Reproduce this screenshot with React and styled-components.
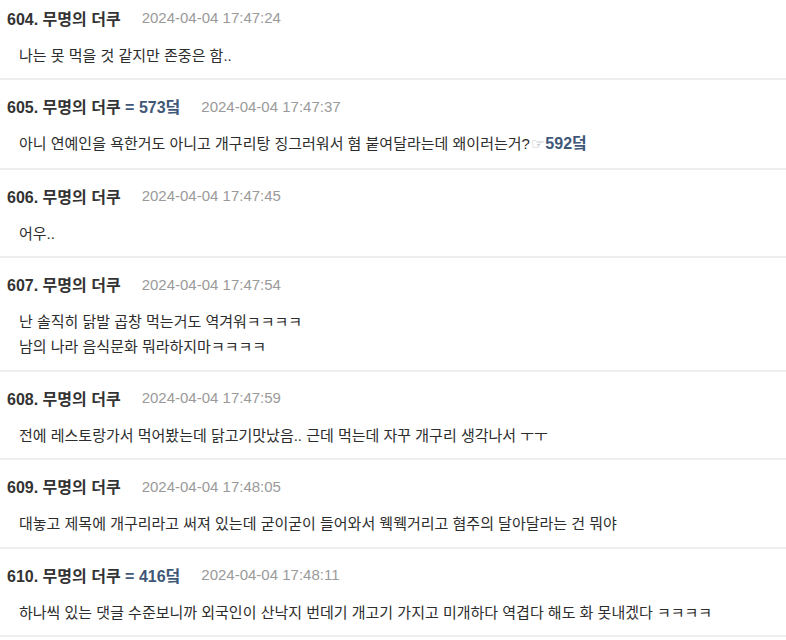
import React from "react";
import styled, { createGlobalStyle } from "styled-components";

const Global = createGlobalStyle`
  html, body { margin: 0; padding: 0; background: #fff; }
  body {
    font-family: "Liberation Sans", "Noto Sans CJK KR", sans-serif;
    color: #333;
    overflow: hidden;
  }
`;

const List = styled.div`
  display: flex;
  flex-direction: column;
  margin-top: -8.5px;
`;

const Row = styled.div`
  display: flex;
  flex-direction: column;
  padding: 15px 0 10.5px 7px;
  border-bottom: 2px solid #eeeeee;
`;

const Header = styled.div`
  display: flex;
  align-items: center;
  height: 22px;
  gap: 21px;
`;

const Name = styled.span`
  font-size: 16px;
  font-weight: 700;
  color: #333;
  white-space: nowrap;
`;

const Score = styled.span`
  color: #3f5878;
`;

const Date = styled.span`
  font-size: 15px;
  color: #9a9a9a;
  white-space: nowrap;
`;

const Body = styled.div`
  margin-top: 14px;
  padding-left: 12px;
  font-size: 15px;
  line-height: 25px;
  color: #2d2d2d;
`;

const Ref = styled.span`
  color: #3f5878;
  font-weight: 700;
  font-size: 16px;
`;

const Hand = styled.span`
  color: #97a0ad;
  font-family: "DejaVu Sans", "Noto Sans CJK KR", sans-serif;
  font-size: 15px;
  margin: 0 1px;
`;

const comments = [
  { no: 604, date: "2024-04-04 17:47:24", lines: ["나는 못 먹을 것 같지만 존중은 함.."] },
  {
    no: 605,
    score: 573,
    date: "2024-04-04 17:47:37",
    lines: [
      <>
        아니 연예인을 욕한거도 아니고 개구리탕 징그러워서 혐 붙여달라는데 왜이러는거?
        <Hand>☞</Hand>
        <Ref>592덬</Ref>
      </>,
    ],
  },
  { no: 606, date: "2024-04-04 17:47:45", lines: ["어우.."] },
  {
    no: 607,
    date: "2024-04-04 17:47:54",
    lines: ["난 솔직히 닭발 곱창 먹는거도 역겨워ㅋㅋㅋㅋ", "남의 나라 음식문화 뭐라하지마ㅋㅋㅋㅋ"],
  },
  {
    no: 608,
    date: "2024-04-04 17:47:59",
    lines: ["전에 레스토랑가서 먹어봤는데 닭고기맛났음.. 근데 먹는데 자꾸 개구리 생각나서 ㅜㅜ"],
  },
  {
    no: 609,
    date: "2024-04-04 17:48:05",
    lines: ["대놓고 제목에 개구리라고 써져 있는데 굳이굳이 들어와서 웩웩거리고 혐주의 달아달라는 건 뭐야"],
  },
  {
    no: 610,
    score: 416,
    date: "2024-04-04 17:48:11",
    lines: ["하나씩 있는 댓글 수준보니까 외국인이 산낙지 번데기 개고기 가지고 미개하다 역겹다 해도 화 못내겠다 ㅋㅋㅋㅋ"],
  },
];

export default function App() {
  return (
    <>
      <Global />
      <List>
        {comments.map((c) => (
          <Row key={c.no}>
            <Header>
              <Name>
                {c.no}. 무명의 더쿠
                {c.score ? <Score> = {c.score}덬</Score> : null}
              </Name>
              <Date>{c.date}</Date>
            </Header>
            <Body>
              {c.lines.map((l, i) => (
                <div key={i}>{l}</div>
              ))}
            </Body>
          </Row>
        ))}
      </List>
    </>
  );
}
